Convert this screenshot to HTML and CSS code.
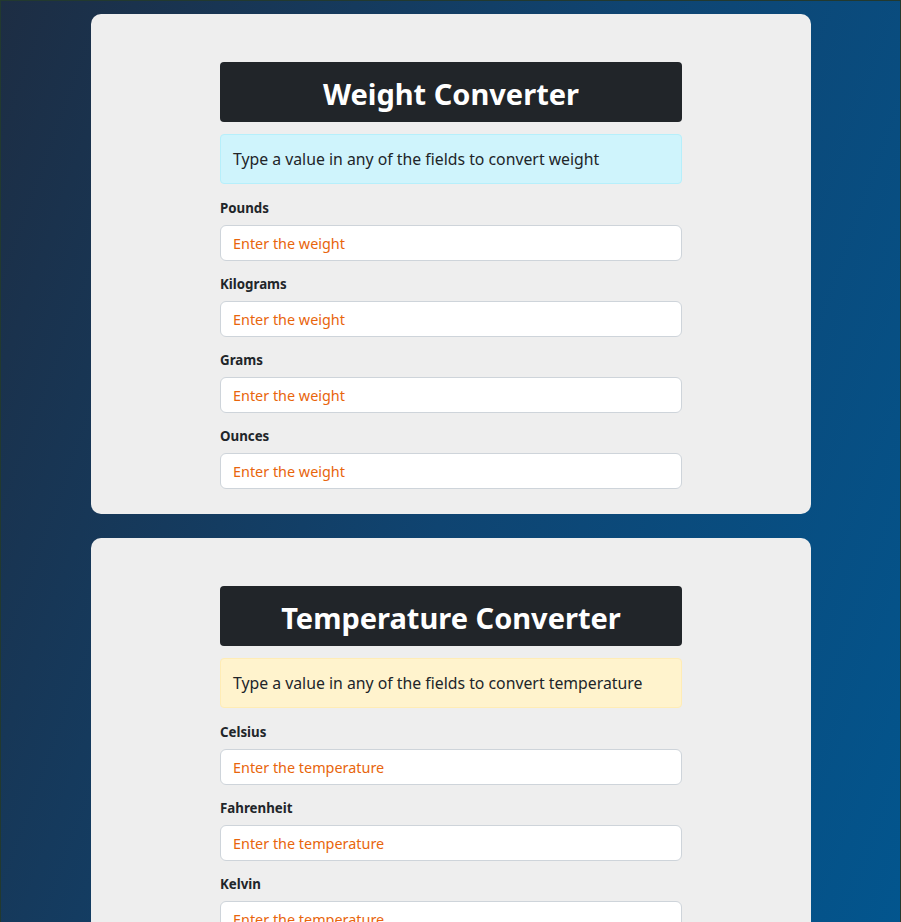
FILE: index.html
```html
<!DOCTYPE html>
<html lang="en">
<head>
<meta charset="utf-8">
<title>Converters</title>
<link rel="stylesheet" href="styles.css">
</head>
<body>
<div class="page">
  <section class="card">
    <div class="inner">
      <h1 class="title">Weight Converter</h1>
      <div class="alert alert-info">Type a value in any of the fields to convert weight</div>
      <label class="label" for="lb">Pounds</label>
      <input class="input" id="lb" type="number" placeholder="Enter the weight">
      <label class="label" for="kg">Kilograms</label>
      <input class="input" id="kg" type="number" placeholder="Enter the weight">
      <label class="label" for="g">Grams</label>
      <input class="input" id="g" type="number" placeholder="Enter the weight">
      <label class="label" for="oz">Ounces</label>
      <input class="input" id="oz" type="number" placeholder="Enter the weight">
    </div>
  </section>
  <section class="card">
    <div class="inner">
      <h1 class="title">Temperature Converter</h1>
      <div class="alert alert-warning">Type a value in any of the fields to convert temperature</div>
      <label class="label" for="c">Celsius</label>
      <input class="input" id="c" type="number" placeholder="Enter the temperature">
      <label class="label" for="f">Fahrenheit</label>
      <input class="input" id="f" type="number" placeholder="Enter the temperature">
      <label class="label" for="k">Kelvin</label>
      <input class="input" id="k" type="number" placeholder="Enter the temperature">
    </div>
  </section>
</div>
</body>
</html>
```
FILE: styles.css
```css
html {
  min-height: 100%;
  background: linear-gradient(110deg, #1d2d43 0%, #0f4471 50%, #02568f 100%);
}
body {
  margin: 0;
  font-family: "Noto Sans", "Open Sans", sans-serif;
  color: #212529;
}
.page {
  border: 1px solid #22392f;
  border-bottom: none;
  padding: 13px 0 24px 90px;
  display: flex;
  flex-direction: column;
  gap: 24px;
}
.card {
  width: 720px;
  background: #eeeeee;
  border-radius: 10px;
  padding: 48px 0 25px;
  box-sizing: border-box;
}
.inner {
  width: 462px;
  margin: 0 auto;
  display: flex;
  flex-direction: column;
}
.title {
  margin: 0 0 12px;
  height: 60px;
  overflow: hidden;
  background: #212529;
  color: #fff;
  border-radius: 4px;
  font-size: 29px;
  font-weight: 700;
  line-height: 64px;
  text-align: center;
}
.alert {
  padding: 12px;
  border: 1px solid;
  border-radius: 4px;
  font-size: 15.8px;
  line-height: 24px;
  margin-bottom: 15px;
}
.alert-info {
  background: #cff4fc;
  border-color: #b6effb;
  color: #212529;
}
.alert-warning {
  background: #fff3cd;
  border-color: #ffecb5;
  color: #212529;
}
.label {
  font-size: 13.3px;
  font-weight: 700;
  line-height: 18px;
  margin-bottom: 8px;
}
.input {
  height: 36px;
  box-sizing: border-box;
  border: 1px solid #ced4da;
  border-radius: 6px;
  background: #fff;
  padding: 0 12px;
  font-family: inherit;
  font-size: 14.4px;
  margin: 0 0 14px;
  outline: none;
}
.input:last-child {
  margin-bottom: 0;
}
.input::placeholder {
  color: #e8650c;
  opacity: 1;
}
```
